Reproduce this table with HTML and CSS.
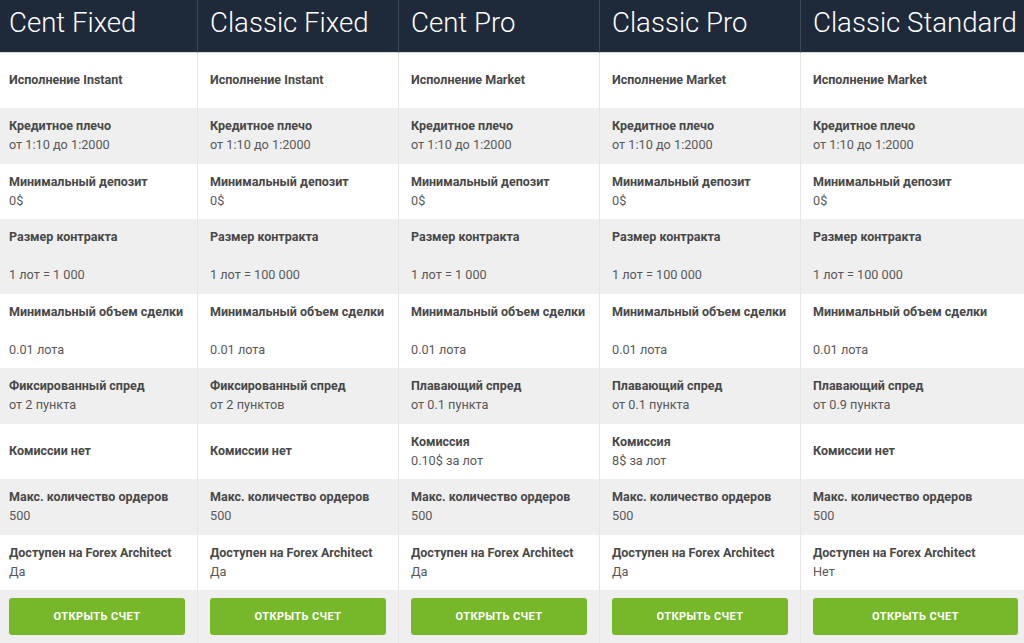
FILE: index.html
```html
<!DOCTYPE html>
<html lang="ru">
<head>
<meta charset="utf-8">
<title>Типы счетов</title>
<link rel="stylesheet" href="styles.css">
</head>
<body>
<div class="plans">
  <div class="cell head">Cent Fixed</div>
  <div class="cell head">Classic Fixed</div>
  <div class="cell head">Cent Pro</div>
  <div class="cell head">Classic Pro</div>
  <div class="cell head">Classic Standard</div>

  <div class="cell"><b>Исполнение Instant</b></div>
  <div class="cell"><b>Исполнение Instant</b></div>
  <div class="cell"><b>Исполнение Market</b></div>
  <div class="cell"><b>Исполнение Market</b></div>
  <div class="cell"><b>Исполнение Market</b></div>

  <div class="cell alt"><b>Кредитное плечо</b><span>от 1:10 до 1:2000</span></div>
  <div class="cell alt"><b>Кредитное плечо</b><span>от 1:10 до 1:2000</span></div>
  <div class="cell alt"><b>Кредитное плечо</b><span>от 1:10 до 1:2000</span></div>
  <div class="cell alt"><b>Кредитное плечо</b><span>от 1:10 до 1:2000</span></div>
  <div class="cell alt"><b>Кредитное плечо</b><span>от 1:10 до 1:2000</span></div>

  <div class="cell"><b>Минимальный депозит</b><span>0$</span></div>
  <div class="cell"><b>Минимальный депозит</b><span>0$</span></div>
  <div class="cell"><b>Минимальный депозит</b><span>0$</span></div>
  <div class="cell"><b>Минимальный депозит</b><span>0$</span></div>
  <div class="cell"><b>Минимальный депозит</b><span>0$</span></div>

  <div class="cell alt gap"><b>Размер контракта</b><span>1 лот = 1 000</span></div>
  <div class="cell alt gap"><b>Размер контракта</b><span>1 лот = 100 000</span></div>
  <div class="cell alt gap"><b>Размер контракта</b><span>1 лот = 1 000</span></div>
  <div class="cell alt gap"><b>Размер контракта</b><span>1 лот = 100 000</span></div>
  <div class="cell alt gap"><b>Размер контракта</b><span>1 лот = 100 000</span></div>

  <div class="cell gap"><b>Минимальный объем сделки</b><span>0.01 лота</span></div>
  <div class="cell gap"><b>Минимальный объем сделки</b><span>0.01 лота</span></div>
  <div class="cell gap"><b>Минимальный объем сделки</b><span>0.01 лота</span></div>
  <div class="cell gap"><b>Минимальный объем сделки</b><span>0.01 лота</span></div>
  <div class="cell gap"><b>Минимальный объем сделки</b><span>0.01 лота</span></div>

  <div class="cell alt"><b>Фиксированный спред</b><span>от 2 пункта</span></div>
  <div class="cell alt"><b>Фиксированный спред</b><span>от 2 пунктов</span></div>
  <div class="cell alt"><b>Плавающий спред</b><span>от 0.1 пункта</span></div>
  <div class="cell alt"><b>Плавающий спред</b><span>от 0.1 пункта</span></div>
  <div class="cell alt"><b>Плавающий спред</b><span>от 0.9 пункта</span></div>

  <div class="cell"><b>Комиссии нет</b></div>
  <div class="cell"><b>Комиссии нет</b></div>
  <div class="cell"><b>Комиссия</b><span>0.10$ за лот</span></div>
  <div class="cell"><b>Комиссия</b><span>8$ за лот</span></div>
  <div class="cell"><b>Комиссии нет</b></div>

  <div class="cell alt"><b>Макс. количество ордеров</b><span>500</span></div>
  <div class="cell alt"><b>Макс. количество ордеров</b><span>500</span></div>
  <div class="cell alt"><b>Макс. количество ордеров</b><span>500</span></div>
  <div class="cell alt"><b>Макс. количество ордеров</b><span>500</span></div>
  <div class="cell alt"><b>Макс. количество ордеров</b><span>500</span></div>

  <div class="cell"><b>Доступен на Forex Architect</b><span>Да</span></div>
  <div class="cell"><b>Доступен на Forex Architect</b><span>Да</span></div>
  <div class="cell"><b>Доступен на Forex Architect</b><span>Да</span></div>
  <div class="cell"><b>Доступен на Forex Architect</b><span>Да</span></div>
  <div class="cell"><b>Доступен на Forex Architect</b><span>Нет</span></div>

  <div class="cell alt action"><a class="btn" href="#">Открыть счет</a></div>
  <div class="cell alt action"><a class="btn" href="#">Открыть счет</a></div>
  <div class="cell alt action"><a class="btn" href="#">Открыть счет</a></div>
  <div class="cell alt action"><a class="btn" href="#">Открыть счет</a></div>
  <div class="cell alt action"><a class="btn" href="#">Открыть счет</a></div>
</div>
</body>
</html>
```

FILE: styles.css
```css
html, body {
  margin: 0;
  padding: 0;
  background: #ffffff;
  overflow: hidden;
}

body {
  font-family: Roboto, "Liberation Sans", Arial, sans-serif;
  font-size: 12.7px;
  color: #555555;
}

.plans {
  display: grid;
  grid-template-columns: 201px 201px 201px 201px 230px;
  margin-left: -3px;
  width: 1034px;
}

.cell {
  box-sizing: border-box;
  min-height: 55px;
  padding: 8px 12px 9.5px;
  line-height: 19px;
  border-right: 1px solid #e6e6e6;
  background: #ffffff;
  display: flex;
  flex-direction: column;
  justify-content: center;
}

.cell b {
  font-size: 12.5px;
  font-weight: 700;
  color: #484848;
  white-space: nowrap;
}

.cell span {
  color: #585858;
}

.cell.alt {
  background: #efefef;
}

.cell.gap b {
  margin-bottom: 19px;
}

.cell.head {
  height: 53px;
  min-height: 0;
  padding: 0 12px 6px;
  background: #1e2a3a;
  border-right: 1px solid #3a4757;
  border-bottom: 1px solid #d6d9dd;
  color: #ffffff;
  font-size: 27.6px;
  font-weight: 300;
  line-height: 32px;
  white-space: nowrap;
}

.cell.action {
  justify-content: flex-start;
  padding: 8px 12px 9px;
}

.btn {
  display: flex;
  align-items: center;
  justify-content: center;
  height: 37px;
  border-radius: 3px;
  background: #76b82a;
  color: #ffffff;
  font-size: 11px;
  font-weight: 700;
  letter-spacing: 0.4px;
  text-transform: uppercase;
  text-decoration: none;
}
```
